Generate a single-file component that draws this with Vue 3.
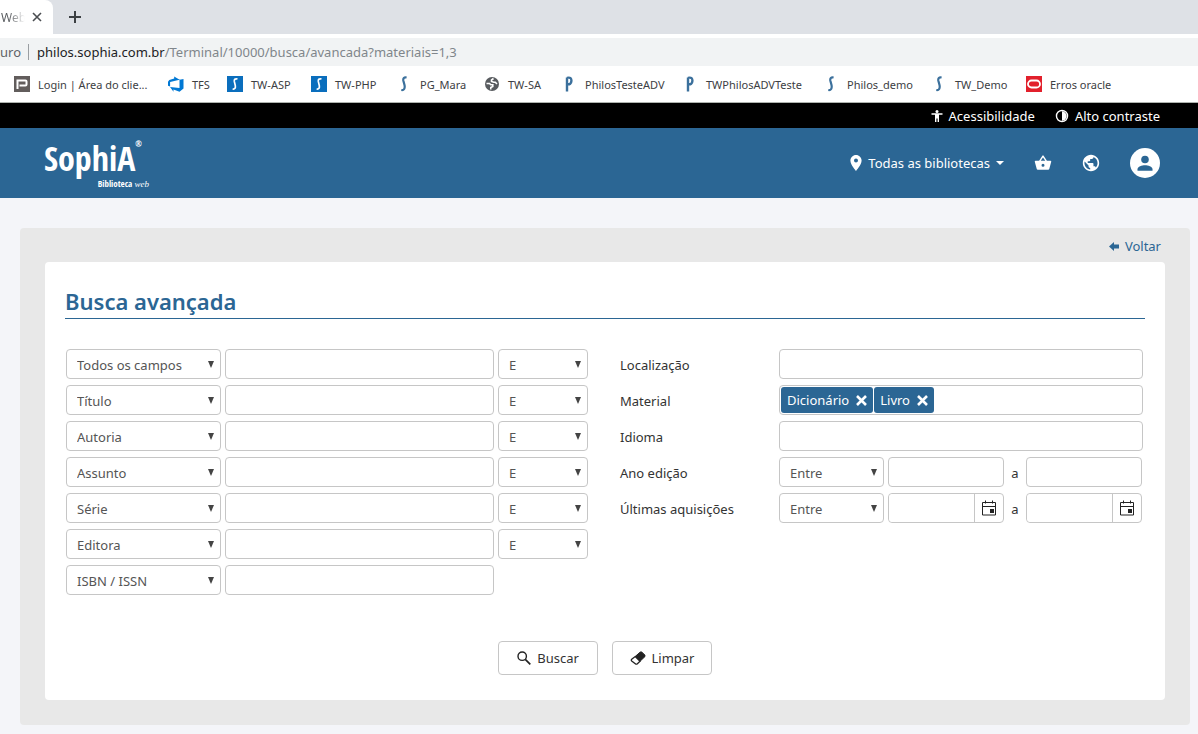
<script setup>
import { ref } from 'vue'

const bookmarks = [
  { icon: 'login', label: 'Login | Área do clie...' },
  { icon: 'tfs', label: 'TFS' },
  { icon: 'tile', label: 'TW-ASP' },
  { icon: 'tile', label: 'TW-PHP' },
  { icon: 's', label: 'PG_Mara' },
  { icon: 'globe', label: 'TW-SA' },
  { icon: 'p', label: 'PhilosTesteADV' },
  { icon: 'p', label: 'TWPhilosADVTeste' },
  { icon: 's', label: 'Philos_demo' },
  { icon: 's', label: 'TW_Demo' },
  { icon: 'oracle', label: 'Erros oracle' }
]

const fields = ['Todos os campos', 'Título', 'Autoria', 'Assunto', 'Série', 'Editora', 'ISBN / ISSN']
const operators = ['E', 'OU', 'NÃO']
const ranges = ['Entre', 'Desde', 'Até']

const criteria = ref(fields.map((field) => ({ field, term: '', operator: 'E' })))
const location = ref('')
const language = ref('')
const materials = ref(['Dicionário', 'Livro'])
const year = ref({ mode: 'Entre', from: '', to: '' })
const acquired = ref({ mode: 'Entre', from: '', to: '' })

function removeMaterial(name) {
  materials.value = materials.value.filter((m) => m !== name)
}

function clearForm() {
  criteria.value = fields.map((field) => ({ field, term: '', operator: 'E' }))
  location.value = ''
  language.value = ''
  materials.value = []
  year.value = { mode: 'Entre', from: '', to: '' }
  acquired.value = { mode: 'Entre', from: '', to: '' }
}
</script>

<template>
  <div class="browser">
    <div class="tabs">
      <div class="tab">
        <span class="tab-title">Web</span>
        <button class="tab-close" type="button" aria-label="Fechar guia">
          <svg width="10" height="10" viewBox="0 0 10 10"><path d="M1 1l8 8M9 1l-8 8" stroke="#4a4d51" stroke-width="1.6" /></svg>
        </button>
      </div>
      <button class="tab-new" type="button" aria-label="Nova guia">
        <svg width="12" height="12" viewBox="0 0 12 12"><path d="M6 0v12M0 6h12" stroke="#3c4043" stroke-width="2" /></svg>
      </button>
    </div>

    <div class="address">
      <span class="secure">uro</span>
      <span class="url"><b>philos.sophia.com.br</b>/Terminal/10000/busca/avancada?materiais=1,3</span>
    </div>

    <nav class="bookmarks" aria-label="Favoritos">
      <a v-for="mark in bookmarks" :key="mark.label" class="bookmark" href="#">
        <svg width="16" height="16" viewBox="0 0 16 16" aria-hidden="true">
          <template v-if="mark.icon === 'login'">
            <rect width="16" height="16" fill="#625d5c" />
            <path d="M3.500 13V4.500h8c.6 0 1 .4 1 1v3c0 .6-.4 1-1 1h-6" fill="none" stroke="#fff" stroke-width="2" />
          </template>
          <path v-else-if="mark.icon === 'tfs'" d="M15.500 3v9.500l-4 3.200-6-2.200v2.200l-3.500-4.600 9.500.8V3.700zM11.600 3.800L6.200.4v2.100L1.300 4 0 5.800v3.900l2.100.9V5.900z" fill="#0078d4" />
          <template v-else-if="mark.icon === 'tile'">
            <rect width="16" height="16" fill="#0a6ebd" />
            <path d="M10.500 3C8 2.300 7 3.600 7.300 5.400l1 4.200C8.700 12 8 13.400 5.600 13" fill="none" stroke="#fff" stroke-width="1.700" />
          </template>
          <path v-else-if="mark.icon === 's'" d="M10.600 1.500C8 1 7 2.300 7.300 4.500l1.200 4.500C9.200 12.500 8 14.500 5.300 14" fill="none" stroke="#3b709c" stroke-width="2.200" />
          <path v-else-if="mark.icon === 'p'" d="M6 15.500V1.500M6 1.800C9.500 1 10.500 2.500 10.400 4.900 10.300 7.500 8.800 8.700 6 8.200" fill="none" stroke="#3b709c" stroke-width="2.400" />
          <template v-else-if="mark.icon === 'globe'">
            <circle cx="8" cy="8" r="7" fill="#585b5f" />
            <path d="M2.500 7.500h3l1.300 1.300h2v1.700l-2 1v2M9.500 2.500L7.500 4v1.500l2.300.8h1.500L13 8" fill="none" stroke="#fff" stroke-width="1.600" />
          </template>
          <template v-else>
            <rect width="16" height="16" fill="#e2202c" />
            <rect x="2" y="4.500" width="12" height="7" rx="3.500" fill="none" stroke="#fff" stroke-width="1.800" />
          </template>
        </svg>
        <span>{{ mark.label }}</span>
      </a>
    </nav>
  </div>

  <div class="access">
    <a href="#">
      <svg width="12" height="12" viewBox="0 0 12 12"><circle cx="6" cy="1.500" r="1.500" fill="#fff" /><path d="M.5 3.300h11v1.500H8V12H6.600V8.600H5.400V12H4V4.800H.5z" fill="#fff" /></svg>
      <span>Acessibilidade</span>
    </a>
    <a href="#">
      <svg width="14" height="14" viewBox="0 0 24 24"><circle cx="12" cy="12" r="9.500" fill="none" stroke="#fff" stroke-width="2.400" /><path d="M12 4v16a8 8 0 0 0 0-16z" fill="#fff" /></svg>
      <span>Alto contraste</span>
    </a>
  </div>

  <header class="header">
    <a class="logo" href="#" aria-label="SophiA Biblioteca web">
      <span class="logo-name">SophiA<small>®</small></span>
      <span class="logo-sub">Biblioteca <i>web</i></span>
    </a>
    <nav class="tools">
      <button class="libraries" type="button">
        <svg width="12" height="16" viewBox="5 2 14 20"><path d="M12 2C8.130 2 5 5.130 5 9c0 5.250 7 13 7 13s7-7.750 7-13c0-3.870-3.130-7-7-7zm0 9.500a2.500 2.500 0 1 1 0-5 2.500 2.500 0 0 1 0 5z" fill="#fff" /></svg>
        <span>Todas as bibliotecas</span>
        <svg width="8" height="4" viewBox="0 0 8 4"><path d="M0 0h8L4 4z" fill="#fff" /></svg>
      </button>
      <button class="basket" type="button" aria-label="Cesta">
        <svg width="18" height="18" viewBox="0 0 24 24"><path d="M17.210 9l-4.380-6.560a1 1 0 0 0-1.660 0L6.790 9H2c-.55 0-1 .45-1 1l.04.27 2.540 9.270C3.810 20.380 4.580 21 5.500 21h13c.92 0 1.690-.62 1.930-1.460l2.540-9.270L23 10c0-.55-.45-1-1-1h-4.790zM9 9l3-4.400L15 9H9zm3 8a2 2 0 1 1 0-4 2 2 0 0 1 0 4z" fill="#fff" /></svg>
      </button>
      <button class="language" type="button" aria-label="Idioma do site">
        <svg width="18" height="18" viewBox="1 1 22 22"><path d="M12 2C6.480 2 2 6.480 2 12s4.480 10 10 10 10-4.480 10-10S17.520 2 12 2zm-1 17.930C7.050 19.440 4 16.080 4 12c0-.62.08-1.210.21-1.790L9 15v1c0 1.100.9 2 2 2v1.930zm6.900-2.540c-.26-.81-1-1.390-1.900-1.390h-1v-3c0-.55-.45-1-1-1H8v-2h2c.55 0 1-.45 1-1V7h2c1.100 0 2-.9 2-2v-.41c2.930 1.190 5 4.060 5 7.410 0 2.080-.8 3.970-2.100 5.390z" fill="#fff" /></svg>
      </button>
      <button class="account" type="button" aria-label="Minha conta">
        <svg width="30" height="30" viewBox="0 0 30 30"><circle cx="15" cy="15" r="15" fill="#fff" /><circle cx="15" cy="11.500" r="3.800" fill="#2b6694" /><path d="M7.500 22.700v-1.500c0-2.600 4.500-4 7.500-4s7.500 1.400 7.500 4v1.500z" fill="#2b6694" /></svg>
      </button>
    </nav>
  </header>

  <main class="page">
    <section class="panel">
      <div class="back">
        <a href="#">
          <svg width="10" height="9" viewBox="0 0 10 9"><path d="M0 4.500L5 0v2.500h5v4H5V9z" fill="#2b6694" /></svg>
          <span>Voltar</span>
        </a>
      </div>

      <form class="card" @submit.prevent>
        <h1>Busca avançada</h1>

        <div class="columns">
          <div class="criteria">
            <div v-for="(row, i) in criteria" :key="i" class="criterion">
              <div class="select">
                <select v-model="row.field" aria-label="Campo">
                  <option v-for="f in fields" :key="f">{{ f }}</option>
                </select>
                <svg width="6" height="7" viewBox="0 0 6 7"><path d="M0 0h6L3 7z" fill="#444" /></svg>
              </div>
              <input v-model="row.term" type="text" :aria-label="row.field" />
              <div v-if="i < criteria.length - 1" class="select">
                <select v-model="row.operator" aria-label="Operador">
                  <option v-for="o in operators" :key="o">{{ o }}</option>
                </select>
                <svg width="6" height="7" viewBox="0 0 6 7"><path d="M0 0h6L3 7z" fill="#444" /></svg>
              </div>
            </div>
          </div>

          <div class="filters">
            <div class="filter">
              <label for="location">Localização</label>
              <input id="location" v-model="location" type="text" />
            </div>
            <div class="filter">
              <label for="material">Material</label>
              <div class="tags">
                <span v-for="m in materials" :key="m" class="tag">
                  {{ m }}
                  <button type="button" :aria-label="'Remover ' + m" @click="removeMaterial(m)">
                    <svg width="11" height="11" viewBox="0 0 11 11"><path d="M1 1l9 9M10 1l-9 9" stroke="#fff" stroke-width="2.600" /></svg>
                  </button>
                </span>
                <input id="material" type="text" />
              </div>
            </div>
            <div class="filter">
              <label for="language">Idioma</label>
              <input id="language" v-model="language" type="text" />
            </div>
            <div class="filter">
              <label for="year">Ano edição</label>
              <div class="range">
                <div class="select">
                  <select id="year" v-model="year.mode">
                    <option v-for="r in ranges" :key="r">{{ r }}</option>
                  </select>
                  <svg width="6" height="7" viewBox="0 0 6 7"><path d="M0 0h6L3 7z" fill="#444" /></svg>
                </div>
                <input v-model="year.from" type="text" aria-label="Ano inicial" />
                <span class="to">a</span>
                <input v-model="year.to" type="text" aria-label="Ano final" />
              </div>
            </div>
            <div class="filter">
              <label for="acquired">Últimas aquisições</label>
              <div class="range">
                <div class="select">
                  <select id="acquired" v-model="acquired.mode">
                    <option v-for="r in ranges" :key="r">{{ r }}</option>
                  </select>
                  <svg width="6" height="7" viewBox="0 0 6 7"><path d="M0 0h6L3 7z" fill="#444" /></svg>
                </div>
                <template v-for="end in ['from', 'to']" :key="end">
                  <span v-if="end === 'to'" class="to">a</span>
                  <div class="date">
                    <input v-model="acquired[end]" type="text" :aria-label="end === 'from' ? 'Data inicial' : 'Data final'" />
                    <button type="button" aria-label="Abrir calendário">
                      <svg width="14" height="16" viewBox="0 0 14 16"><path d="M.5 2.500h13v12.500H.5zM.5 6.500h13M3.500.5v3M10.500.5v3" fill="none" stroke="#222" /><path d="M8 9h4v4H8z" fill="#222" /></svg>
                    </button>
                  </div>
                </template>
              </div>
            </div>
          </div>
        </div>

        <div class="actions">
          <button type="submit">
            <svg width="14" height="14" viewBox="0 0 14 14"><circle cx="5.200" cy="5.200" r="4.200" fill="none" stroke="#222" stroke-width="1.400" /><path d="M8.300 8.300l5 5" stroke="#222" stroke-width="1.700" /></svg>
            <span>Buscar</span>
          </button>
          <button type="button" @click="clearForm">
            <svg width="16" height="14" viewBox="0 0 16 14"><path d="M5.200 5.500L10.300 1h1.400l3.300 3.200v1.300L10 10.300z" fill="#222" stroke="#222" /><path d="M5.200 5.500l4.800 4.800-2.600 2.400c-.6.500-1.500.5-2.100 0L1.700 10c-.6-.6-.6-1.300 0-1.800z" fill="#fff" stroke="#222" stroke-width="1.300" /></svg>
            <span>Limpar</span>
          </button>
        </div>
      </form>
    </section>
  </main>
</template>

<style>
body {
  background: #f4f5f9;
  font-family: "Noto Sans", "Open Sans", sans-serif;
  font-size: 13px;
  color: #333;
}
</style>

<style scoped>
* {
  box-sizing: border-box;
}
a {
  color: inherit;
  text-decoration: none;
}
button,
input,
select {
  font: inherit;
  color: inherit;
  margin: 0;
}
button {
  background: none;
  border: 0;
  padding: 0;
  display: flex;
  align-items: center;
}
svg {
  display: block;
  flex: none;
}

.browser {
  background: #fff;
  border-bottom: 1px solid #aeb3ae;
}
.tabs {
  display: flex;
  align-items: center;
  height: 34px;
  background: #dee1e6;
}
.tab {
  display: flex;
  align-items: center;
  justify-content: space-between;
  width: 53px;
  height: 34px;
  padding: 0 11px 0 1px;
  background: #fff;
  border-top-right-radius: 8px;
}
.tab-title {
  font-size: 12px;
  background: linear-gradient(90deg, #55585c 30%, #fff 95%);
  background-clip: text;
  color: transparent;
}
.tab-new {
  margin-left: 16px;
}
.address {
  display: flex;
  align-items: center;
  height: 28px;
  margin-top: 4px;
  background: #f1f3f4;
  color: #80868b;
  line-height: 16px;
}
.secure {
  color: #5f6368;
  padding-right: 7px;
  border-right: 1px solid #9a9ea2;
}
.url {
  padding-left: 8px;
}
.url b {
  font-weight: 400;
  color: #202124;
}
.bookmarks {
  display: grid;
  grid-template-columns: 154px 59px 84px 85px 88px 77px 121px 141px 108px 95px 1fr;
  align-items: center;
  height: 36px;
  padding-left: 14px;
  font-size: 11px;
  color: #3c4043;
  white-space: nowrap;
}
.bookmark {
  display: flex;
  align-items: center;
  gap: 8px;
}

.access {
  display: flex;
  justify-content: flex-end;
  gap: 20px;
  height: 25px;
  padding-right: 38px;
  background: #000;
  color: #fff;
}
.access a {
  display: flex;
  align-items: center;
  gap: 6px;
}

.header {
  display: flex;
  justify-content: space-between;
  height: 70px;
  padding: 0 38px 0 44px;
  background: #2b6694;
  color: #fff;
}
.logo {
  display: flex;
  flex-direction: column;
  width: 105px;
  padding-top: 10px;
  font-family: "Liberation Sans Narrow", "Open Sans Condensed", "Liberation Sans", sans-serif;
}
.logo-name {
  display: flex;
  font-size: 34px;
  line-height: 40px;
  font-weight: 500;
  white-space: nowrap;
}
.logo-name small {
  font-size: 8px;
  line-height: 12px;
}
.logo-sub {
  align-self: flex-end;
  font-size: 9px;
  line-height: 12px;
  font-weight: 700;
  white-space: nowrap;
}
.logo-sub i {
  font-family: "Liberation Serif", serif;
  font-size: 9px;
  font-weight: 400;
}
.tools {
  display: flex;
  align-items: center;
}
.libraries {
  gap: 6px;
}
.basket {
  margin-left: 30px;
}
.language {
  margin-left: 30px;
}
.account {
  margin-left: 30px;
}

.page {
  padding: 30px 8px 9px 20px;
}
.panel {
  padding: 0 25px 25px;
  background: #e8e8e8;
  border-radius: 4px;
}
.back {
  display: flex;
  justify-content: flex-end;
  align-items: center;
  height: 34px;
  padding: 2px 4px 0 0;
  color: #2b6694;
}
.back a {
  display: flex;
  align-items: center;
  gap: 6px;
}
.card {
  padding: 24px 20px 25px;
  background: #fff;
  border-radius: 4px;
}
h1 {
  margin: 0 0 30px;
  padding-bottom: 1px;
  border-bottom: 1px solid #2b6694;
  font-size: 22px;
  line-height: 31px;
  font-weight: 600;
  color: #2b6694;
}
.columns {
  display: grid;
  grid-template-columns: 522fr 523fr;
  gap: 32px;
  padding: 0 2px 0 1px;
}
.criteria,
.filters {
  display: flex;
  flex-direction: column;
  gap: 6px;
}
.criterion {
  display: grid;
  grid-template-columns: 155fr 269fr 90fr;
  gap: 4px;
}
.filter {
  display: grid;
  grid-template-columns: 159fr 364fr;
  align-items: center;
}
.filter label,
.to {
  padding-top: 2px;
}
.range {
  display: grid;
  grid-template-columns: 105fr 116fr 14px 116fr;
  align-items: center;
  column-gap: 4px;
  padding-right: 1px;
}
.to {
  text-align: center;
}
input,
select,
.tags,
.date {
  width: 100%;
  min-width: 0;
  height: 30px;
  background: #fff;
  border: 1px solid #c6c6c6;
  border-radius: 4px;
}
.select {
  display: grid;
  align-items: center;
}
.select > * {
  grid-area: 1 / 1;
}
.select svg {
  justify-self: end;
  margin-right: 7px;
  pointer-events: none;
}
select {
  appearance: none;
  padding: 2px 20px 0 10px;
  color: #555;
}
.tags {
  display: flex;
  gap: 1px;
  padding: 1px;
}
.tags input,
.date input {
  flex: 1;
  width: 0;
  height: auto;
  border: 0;
}
.tag {
  display: flex;
  align-items: center;
  gap: 7px;
  padding: 0 6px;
  background: #2b6694;
  border-radius: 3px;
  color: #fff;
}
.date {
  display: flex;
}
.date button {
  justify-content: center;
  width: 29px;
  border-left: 1px solid #c6c6c6;
}
.actions {
  display: flex;
  justify-content: center;
  gap: 14px;
  margin-top: 46px;
}
.actions button {
  justify-content: center;
  gap: 6px;
  width: 100px;
  height: 34px;
  border: 1px solid #c6c6c6;
  border-radius: 4px;
}
</style>
